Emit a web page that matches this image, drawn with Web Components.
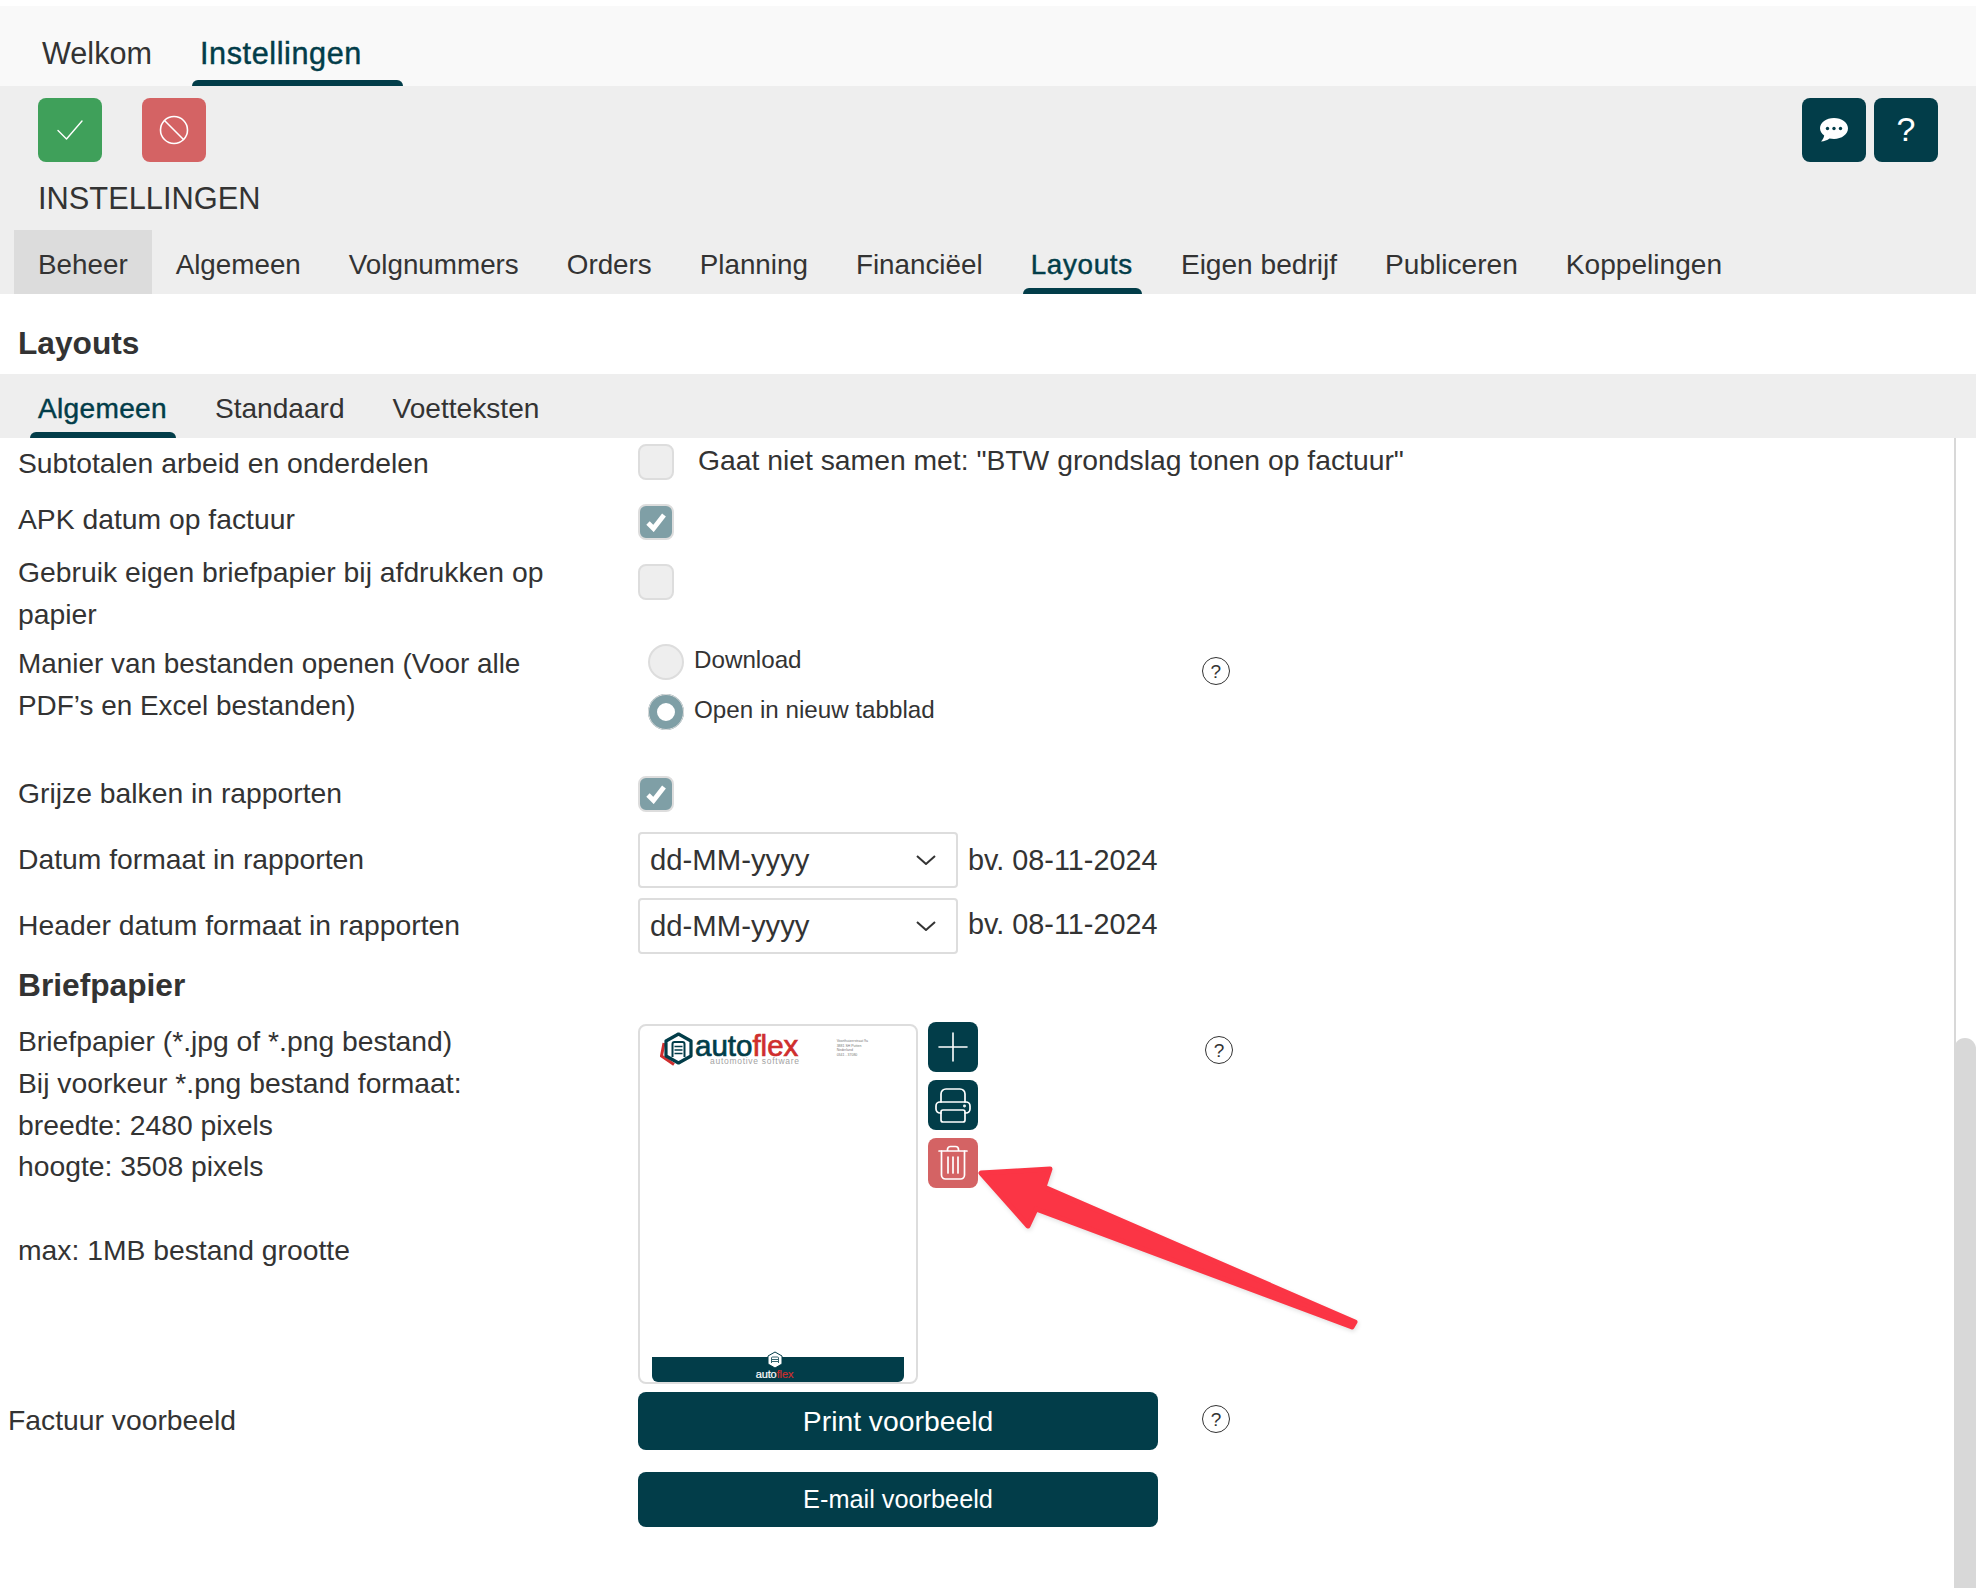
<!DOCTYPE html>
<html lang="nl">
<head>
<meta charset="utf-8">
<title>Instellingen</title>
<style>
    html, body { margin: 0; height: 100%; background: #fff; }
    body { font-family: "Liberation Sans", Arial, sans-serif; color: #333; overflow: hidden; }
    .teal { --bg: #023d49; }
    .red { --bg: #d46364; }
    .green { --bg: #3fa05a; }
    svg.ic { display: block; fill: none; stroke: #fff; stroke-linecap: round; stroke-linejoin: round; }
</style>
</head>
<body>

<af-app>
    <af-tabs slot="top" bar="top">
        <af-tab>Welkom</af-tab>
        <af-tab active>Instellingen</af-tab>
    </af-tabs>

    <af-toolbar slot="toolbar">
        <af-icon-button slot="left" class="green">
            <svg class="ic" width="26" height="22" viewBox="0 0 26 22" stroke-width="1.4"><path d="M1 11.500 9.500 20 25 2"/></svg>
        </af-icon-button>
        <af-icon-button slot="left" class="red">
            <svg class="ic" width="30" height="30" viewBox="0 0 30 30" stroke-width="1.6"><circle cx="15" cy="15" r="13.500"/><path d="M5.500 5.500 24.500 24.500"/></svg>
        </af-icon-button>
        <af-icon-button slot="right" class="teal">
            <svg width="30" height="26" viewBox="0 0 30 26"><path fill="#fff" d="M15 1C7.300 1 1 5.600 1 11.300c0 2.900 1.600 5.400 4.200 7.300-.4 2.300-1.600 4.300-3.200 6 3.300-.3 6.300-1.400 8.500-3.100 1.400.3 2.900.5 4.500.5 7.700 0 14-4.700 14-10.700S22.700 1 15 1z"/><circle cx="8.500" cy="11.500" r="1.700" fill="#023d49"/><circle cx="15" cy="11.500" r="1.700" fill="#023d49"/><circle cx="21.500" cy="11.500" r="1.700" fill="#023d49"/></svg>
        </af-icon-button>
        <af-icon-button slot="right" class="teal" style="font-size:34px;color:#fff;padding-bottom:2px;box-sizing:border-box">?</af-icon-button>
        <span slot="title">INSTELLINGEN</span>
        <af-tabs slot="tabs" bar="main">
            <af-tab selected>Beheer</af-tab>
            <af-tab>Algemeen</af-tab>
            <af-tab>Volgnummers</af-tab>
            <af-tab>Orders</af-tab>
            <af-tab>Planning</af-tab>
            <af-tab>Financiëel</af-tab>
            <af-tab active>Layouts</af-tab>
            <af-tab style="--fs:28.100px">Eigen bedrijf</af-tab>
            <af-tab style="--fs:28.100px">Publiceren</af-tab>
            <af-tab style="--fs:28.100px">Koppelingen</af-tab>
        </af-tabs>
    </af-toolbar>

    <af-heading slot="heading" style="--h:80px;--pt:19px">Layouts</af-heading>

    <af-tabs slot="subtabs" bar="sub">
        <af-tab active>Algemeen</af-tab>
        <af-tab>Standaard</af-tab>
        <af-tab>Voetteksten</af-tab>
    </af-tabs>

    <af-row style="--h:56px;--lt:4px;--ct:6px">
        Subtotalen arbeid en onderdelen
        <af-check slot="control"></af-check>
        <span slot="control" style="margin:-5px 0 0 24px;line-height:42px">Gaat niet samen met: "BTW grondslag tonen op factuur"</span>
    </af-row>
    <af-row style="--h:54px;--lt:4px;--ct:10px">
        APK datum op factuur
        <af-check slot="control" checked></af-check>
    </af-row>
    <af-row style="--h:90px;--lt:3px;--ct:16px">
        Gebruik eigen briefpapier bij afdrukken op papier
        <af-check slot="control"></af-check>
    </af-row>
    <af-row style="--h:130px;--lt:5px;--ct:6px;--fs:27.9px">
        Manier van bestanden openen (Voor alle PDF’s en Excel bestanden)
        <af-radio-group slot="control">
            <af-radio>Download</af-radio>
            <af-radio checked>Open in nieuw tabblad</af-radio>
        </af-radio-group>
        <af-help slot="control" style="margin:13px 0 0 267px"></af-help>
    </af-row>
    <af-row style="--h:56px;--lt:4px;--ct:8px">
        Grijze balken in rapporten
        <af-check slot="control" checked></af-check>
    </af-row>
    <af-row style="--h:66px;--lt:14px;--ct:8px">
        Datum formaat in rapporten
        <af-select slot="control">dd-MM-yyyy</af-select>
        <span slot="control" style="margin:7px 0 0 10px;line-height:42px;font-size:28.800px">bv. 08-11-2024</span>
    </af-row>
    <af-row style="--h:66px;--lt:14px;--ct:8px">
        Header datum formaat in rapporten
        <af-select slot="control">dd-MM-yyyy</af-select>
        <span slot="control" style="margin:5px 0 0 10px;line-height:42px;font-size:28.800px">bv. 08-11-2024</span>
    </af-row>

    <af-heading style="--h:56px;--pt:2px">Briefpapier</af-heading>

    <af-row style="--h:380px;--lt:9px;--ct:10px;--lh:41.800px">
        Briefpapier (*.jpg of *.png bestand)<br>
        Bij voorkeur *.png bestand formaat:<br>
        breedte: 2480 pixels<br>
        hoogte: 3508 pixels<br>
        <br>
        max: 1MB bestand grootte
        <af-letterhead slot="control" style="margin-top:2px"></af-letterhead>
        <af-side-actions slot="control">
            <af-icon-button class="teal" small>
                <svg class="ic" width="30" height="30" viewBox="0 0 30 30" stroke-width="1.600"><path d="M15 1V29M1 15H29"/></svg>
            </af-icon-button>
            <af-icon-button class="teal" small>
                <svg class="ic" width="36" height="36" viewBox="0 0 36 36" stroke-width="1.700"><path d="M6 15V7A5 5 0 0 1 11 2h14a5 5 0 0 1 5 5V15"/><path d="M6 26H5a4 4 0 0 1-4-4v-3a4 4 0 0 1 4-4h26a4 4 0 0 1 4 4v3a4 4 0 0 1-4 4h-1"/><rect x="6" y="23" width="24" height="12" rx="2"/><circle cx="29.500" cy="19" r=".6"/></svg>
            </af-icon-button>
            <af-icon-button class="red" small>
                <svg class="ic" width="32" height="36" viewBox="0 0 32 36" stroke-width="1.700"><path d="M2 6H30M10.500 6V4.500A3 3 0 0 1 13.500 1.500h5a3 3 0 0 1 3 3V6"/><path d="M4.500 6V30a4 4 0 0 0 4 4h15a4 4 0 0 0 4-4V6"/><path d="M11 12V28M16 12V28M21 12V28"/></svg>
            </af-icon-button>
        </af-side-actions>
        <af-help slot="control" style="margin:14px 0 0 227px"></af-help>
    </af-row>

    <af-row style="--h:auto;--lt:7px;--ct:0px;--lx:-10px">
        Factuur voorbeeld
        <af-preview-actions slot="control">
            <af-action-button>Print voorbeeld</af-action-button>
            <af-action-button style="--bh:55px;--bfs:25.300px">E-mail voorbeeld</af-action-button>
        </af-preview-actions>
        <af-help slot="control" style="margin:13px 0 0 44px"></af-help>
    </af-row>

    <af-arrow slot="overlay"></af-arrow>
</af-app>

<script>
    // little helper, every element gets the same open shadow root setup
    function define(name, html) {
        const template = document.createElement("template");
        template.innerHTML = html;
        customElements.define(name, class extends HTMLElement {
            constructor() {
                super();
                this.attachShadow({ mode: "open" }).appendChild(template.content.cloneNode(true));
            }
        });
    }

    define("af-app", `
        <style>
            :host { display: flex; flex-direction: column; height: 1588px; position: relative; overflow: hidden; padding-top: 6px; box-sizing: border-box; }
            .content { flex: 1; display: block; position: relative; padding-right: 22px; }
            .track { position: absolute; top: 0; right: 0; bottom: 0; width: 22px; border-left: 2px solid #d8d8d8; box-sizing: border-box; }
            .thumb { position: absolute; top: 600px; right: 0; bottom: 0; width: 22px; background: #d8d8d8; border-radius: 11px 11px 0 0; }
        </style>
        <slot name="top"></slot>
        <slot name="toolbar"></slot>
        <slot name="heading"></slot>
        <slot name="subtabs"></slot>
        <div class="content">
            <slot></slot>
            <div class="track"></div>
            <div class="thumb"></div>
        </div>
        <slot name="overlay"></slot>
    `);

    define("af-tabs", `
        <style>
            :host { display: flex; color: #333; --il: 16px; --ir: 15px; --pad: 24px; }
            :host([bar="top"]) { background: #f9f9f9; height: 80px; padding-left: 18px; --fs: 30.600px; --il: 16px; --ir: -17px; --als: .6px; --tp: 14px; }
            :host([bar="main"]) { height: 64px; margin-left: -24px; --fs: 27.800px; --als: .7px; --tp: 5px; }
            :host([bar="sub"]) { background: #eee; height: 64px; padding-left: 14px; --fs: 28.100px; --als: .3px; --tp: 5px; }
        </style>
        <slot></slot>
    `);

    define("af-tab", `
        <style>
            :host { display: flex; align-items: center; position: relative; padding: var(--tp) var(--pad) 0; font-size: var(--fs); white-space: nowrap; }
            :host([selected]) { background: #dcdcdc; }
            :host([active]) { color: #023d49; -webkit-text-stroke: .45px #023d49; letter-spacing: var(--als); }
            :host([active])::after { content: ""; position: absolute; left: var(--il); right: var(--ir); bottom: 0; height: 6px; background: #023d49; border-radius: 6px 6px 0 0; }
        </style>
        <slot></slot>
    `);

    define("af-toolbar", `
        <style>
            :host { display: block; background: #eee; height: 208px; padding: 12px 38px 0; box-sizing: border-box; }
            .buttons { display: flex; justify-content: space-between; height: 64px; }
            .group { display: flex; }
            .left { gap: 40px; }
            .right { gap: 8px; }
            .title { height: 68px; display: flex; align-items: center; font-size: 30.800px; padding-top: 6px; box-sizing: border-box; }
        </style>
        <div class="buttons">
            <div class="group left"><slot name="left"></slot></div>
            <div class="group right"><slot name="right"></slot></div>
        </div>
        <div class="title"><slot name="title"></slot></div>
        <slot name="tabs"></slot>
    `);

    define("af-icon-button", `
        <style>
            :host { display: flex; align-items: center; justify-content: center; width: 64px; height: 64px; background: var(--bg); border-radius: 8px; }
            :host([small]) { width: 50px; height: 50px; }
        </style>
        <slot></slot>
    `);

    define("af-heading", `
        <style>
            :host { display: flex; align-items: center; height: var(--h); box-sizing: border-box; padding: var(--pt) 0 0 18px; font-size: 31.700px; font-weight: 700; color: #333; }
        </style>
        <slot></slot>
    `);

    define("af-row", `
        <style>
            :host { display: grid; grid-template-columns: 620px 1fr; height: var(--h); padding-left: 18px; font-size: var(--fs, 28.300px); line-height: var(--lh, 42px); color: #333; }
            .label { width: 560px; padding-top: var(--lt); margin-left: var(--lx, 0); }
            .control { display: flex; align-items: flex-start; padding-top: var(--ct); }
        </style>
        <div class="label"><slot></slot></div>
        <div class="control"><slot name="control"></slot></div>
    `);

    define("af-check", `
        <style>
            :host { display: flex; align-items: center; justify-content: center; width: 36px; height: 36px; box-sizing: border-box; border: 2px solid #ddd; border-radius: 8px; background: #eee; flex: none; }
            :host([checked]) { background: #7f9fa6; }
            svg { display: none; }
            :host([checked]) svg { display: block; }
        </style>
        <svg width="22" height="20" viewBox="0 0 22 20"><path d="M3 11 8.500 16.500 19 3" fill="none" stroke="#fff" stroke-width="4.800"/></svg>
    `);

    define("af-radio-group", `
        <style>
            :host { display: flex; flex-direction: column; gap: 14px; margin-left: 10px; }
        </style>
        <slot></slot>
    `);

    define("af-radio", `
        <style>
            :host { display: flex; gap: 10px; height: 36px; font-size: 24.200px; line-height: 32px; color: #333; white-space: nowrap; }
            .dot { width: 36px; height: 36px; box-sizing: border-box; border: 2px solid #ddd; border-radius: 50%; background: #eee; flex: none; }
            :host([checked]) .dot { background: #fff; border: 9px solid #7f9fa6; outline: 1px solid #ddd; outline-offset: -1px; }
        </style>
        <div class="dot"></div>
        <span><slot></slot></span>
    `);

    define("af-help", `
        <style>
            :host { display: flex; align-items: center; justify-content: center; width: 28px; height: 28px; box-sizing: border-box; border: 1.500px solid #333; border-radius: 50%; font-size: 19px; line-height: 1; color: #333; flex: none; }
        </style>
        ?
    `);

    define("af-select", `
        <style>
            :host { display: flex; align-items: center; justify-content: space-between; width: 320px; height: 56px; box-sizing: border-box; padding: 0 19px 0 10px; border: 2px solid #ddd; border-radius: 4px; background: #fff; font-size: 29.300px; color: #333; flex: none; }
            svg { fill: none; stroke: #333; stroke-width: 2; }
        </style>
        <slot></slot>
        <svg width="22" height="10" viewBox="0 0 22 10"><path d="M2 1 11 9 20 1"/></svg>
    `);

    define("af-letterhead", `
        <style>
            :host { display: block; position: relative; width: 280px; height: 360px; box-sizing: border-box; border: 2px solid #ddd; border-radius: 8px; background: #fff; flex: none; line-height: normal; }
            .top { display: flex; justify-content: space-between; padding: 6px 0 0 20px; }
            .logo { display: flex; align-items: flex-start; }
            .name { font-size: 29.500px; line-height: 28px; color: #023d49; -webkit-text-stroke: .7px #023d49; white-space: nowrap; }
            .name b { color: #cf2e2e; -webkit-text-stroke: .7px #cf2e2e; font-weight: 400; }
            .tag { font-size: 8.500px; line-height: 7px; letter-spacing: .72px; color: #a3a3a3; margin: -2.500px 0 0 15px; white-space: nowrap; }
            .addr { font-size: 3.500px; line-height: 4.600px; color: #777; margin: 7px 48px 0 0; white-space: nowrap; }
            .foot { position: absolute; left: 12px; right: 12px; bottom: 0; height: 25px; background: #023d49; border-radius: 0 0 6px 6px; display: flex; flex-direction: column; align-items: center; color: #fff; }
            .foot svg { margin: -6px 0 0 -6px; display: block; flex: none; }
            .foot span { font-size: 11px; line-height: 9px; letter-spacing: -.1px; -webkit-text-stroke: .2px #fff; margin: 1px 0 0 -7px; }
            .foot b { color: #cf2e2e; -webkit-text-stroke: .2px #cf2e2e; font-weight: 400; }
        </style>
        <div class="top">
            <div class="logo">
                <svg width="35" height="34" viewBox="0 0 35 34" style="flex:none">
                    <path d="M4 11 1.500 24 14 32.500" fill="none" stroke="#cf2e2e" stroke-width="3"/>
                    <path d="M18.500 2 31 9v15l-12.500 7L6 24V9z" fill="#fff" stroke="#023d49" stroke-width="3.200" stroke-linejoin="round"/>
                    <path d="M12.500 25V12a2 2 0 0 1 2-2h8a2 2 0 0 1 2 2V25" fill="none" stroke="#023d49" stroke-width="2"/>
                    <path d="M14.500 14.500h8M14.500 18h8M14.500 21.500h8" stroke="#023d49" stroke-width="1.500"/>
                </svg>
                <div>
                    <div class="name">auto<b>flex</b></div>
                    <div class="tag">automotive software</div>
                </div>
            </div>
            <div class="addr">Voorthuizerstraat 9a<br>3881 SH Putten<br>Nederland<br>0341 - 37080</div>
        </div>
        <div class="foot">
            <svg width="18" height="18" viewBox="0 0 18 18">
                <path d="M9 1 16 5v8l-7 4-7-4V5z" fill="#fff" stroke="#023d49" stroke-width="1"/>
                <path d="M5.500 12V7a1 1 0 0 1 1-1h5a1 1 0 0 1 1 1v5M6 8.500h6M6 10.500h6" fill="none" stroke="#023d49" stroke-width=".8"/>
            </svg>
            <span>auto<b>flex</b></span>
        </div>
    `);

    define("af-side-actions", `
        <style>
            :host { display: flex; flex-direction: column; gap: 8px; margin-left: 10px; flex: none; }
        </style>
        <slot></slot>
    `);

    define("af-preview-actions", `
        <style>
            :host { display: flex; flex-direction: column; gap: 22px; flex: none; }
        </style>
        <slot></slot>
    `);

    define("af-action-button", `
        <style>
            :host { display: flex; align-items: center; justify-content: center; width: 520px; height: var(--bh, 58px); padding-bottom: 1px; box-sizing: border-box; background: #023d49; color: #fff; border-radius: 8px; font-size: var(--bfs, 28.300px); }
        </style>
        <slot></slot>
    `);

    define("af-arrow", `
        <style>
            :host { display: block; position: absolute; left: 0; top: 0; pointer-events: none; }
            svg { display: block; overflow: visible; filter: drop-shadow(1px 2px 2px rgba(0,0,0,.12)); }
        </style>
        <svg width="1976" height="1588" viewBox="0 0 1976 1588">
            <path d="M981 1173 1050 1169 1044 1187 1355 1322 1352 1327 1036 1209 1028 1226z" fill="#fb3545" stroke="#fb3545" stroke-width="5" stroke-linejoin="round"/>
        </svg>
    `);
</script>
</body>
</html>
